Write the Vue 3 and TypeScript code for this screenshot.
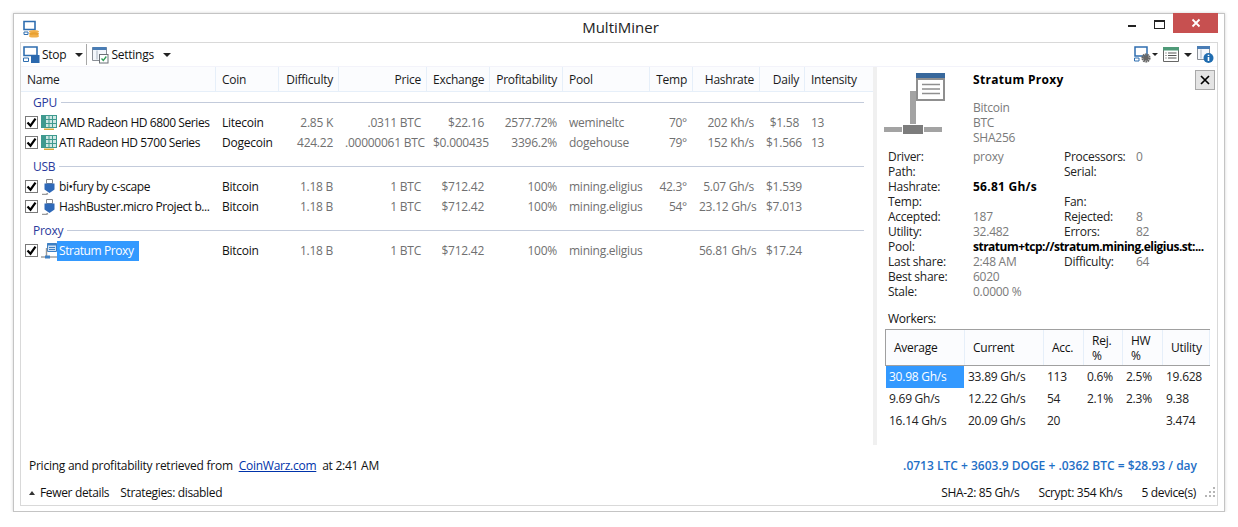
<template>
  <div class="window">
    <div class="titlebar">
      <svg class="app-icon" width="18" height="18" viewBox="0 0 18 18">
        <path d="M1 1.500h11v8H1z" fill="#fff" stroke="#2f6eb0" stroke-width="1.600" />
        <path d="M1 12h4v2.500H1z" fill="none" stroke="#2f6eb0" stroke-width="1" />
        <ellipse cx="11" cy="11.500" rx="5" ry="1.600" fill="#f2b04a" />
        <ellipse cx="11" cy="13.800" rx="5" ry="1.600" fill="#e8a030" />
        <ellipse cx="11" cy="16" rx="5" ry="1.500" fill="#f2b04a" />
      </svg>
      <div class="title">MultiMiner</div>
      <div class="win-buttons">
        <span class="min"></span>
        <span class="max"></span>
        <span class="close">
          <svg width="10" height="10" viewBox="0 0 10 10"><path d="M1.500 1.500l7 7M8.500 1.500l-7 7" stroke="#fff" stroke-width="1.800" /></svg>
        </span>
      </div>
    </div>

    <div class="frame">
      <div class="toolbar">
        <button class="tool stop">
          <svg width="17" height="17" viewBox="0 0 17 17">
            <path d="M1 1h13v8.500H1z" fill="#fff" stroke="#2f6eb0" stroke-width="1.600" />
            <path d="M.5 12h5v3.500h-5z" fill="none" stroke="#2f6eb0" stroke-width="1" />
            <rect x="8" y="9" width="8.500" height="8" fill="#2b69ae" />
          </svg>
          <span>Stop</span>
          <i class="caret"></i>
        </button>
        <span class="tool-sep"></span>
        <button class="tool settings">
          <svg width="17" height="18" viewBox="0 0 17 18">
            <path d="M.5 1.500h14v13H.5z" fill="#f4f7fb" stroke="#8a8f96" />
            <path d="M.5 1h14v3H.5z" fill="#4a7db5" />
            <path d="M5 4.500v9" stroke="#a9b4c0" />
            <rect x="7.500" y="8.500" width="8.500" height="8.500" fill="#fff" stroke="#6b7076" />
            <path d="M9.500 12.500l1.800 2 3-4" fill="none" stroke="#2d9a54" stroke-width="1.300" />
          </svg>
          <span>Settings</span>
          <i class="caret"></i>
        </button>
        <div class="tool-right">
          <svg class="gear-icon" width="19" height="18" viewBox="0 0 19 18">
            <path d="M1 1h12v9H1z" fill="#fff" stroke="#2f6eb0" stroke-width="1.500" />
            <path d="M.5 12h4.500v3H.5z" fill="none" stroke="#2f6eb0" />
            <circle cx="12" cy="12" r="3.400" fill="none" stroke="#666" stroke-width="2.400" stroke-dasharray="1.600 .5" />
            <circle cx="12" cy="12" r="2.600" fill="#666" />
          </svg>
          <i class="caret small"></i>
          <svg class="list-icon" width="17" height="16" viewBox="0 0 17 16">
            <path d="M.5 .5h15v14h-15z" fill="#fff" stroke="#666" />
            <path d="M0 0h16v3.500H0z" fill="#4f9a78" />
            <path d="M2.500 6h1M5 6h8.500M2.500 8.500h1M5 8.500h8.500M2.500 11h1M5 11h8.500" stroke="#555" />
          </svg>
          <i class="caret"></i>
          <svg class="info-icon" width="17" height="18" viewBox="0 0 17 18">
            <path d="M.5 .5h12v13H.5z" fill="#f4f7fb" stroke="#8a8f96" />
            <path d="M0 0h13v3H0z" fill="#4a7db5" />
            <path d="M4 3.500v9" stroke="#a9b4c0" />
            <circle cx="11.500" cy="12" r="5" fill="#1f6cb0" />
            <path d="M11.500 8.800v1.200M11.500 11v4" stroke="#fff" stroke-width="1.600" />
          </svg>
        </div>
      </div>

      <div class="main">
        <div class="list">
          <div class="head row">
            <div v-for="c in columns" :key="c.label" class="cell" :class="{ r: c.right }">{{ c.label }}</div>
          </div>
          <div v-for="g in groups" :key="g.name" class="group">
            <div class="group-head">
              <span>{{ g.name }}</span>
              <i></i>
            </div>
            <div v-for="d in g.devices" :key="d.name" class="row">
              <div class="cell name-cell">
                <span class="check">
                  <svg width="11" height="11" viewBox="0 0 11 11"><path d="M1.500 5.500l3 3.200 5-7" fill="none" stroke="#000" stroke-width="2.200" /></svg>
                </span>
                <svg v-if="g.name === 'GPU'" class="dev-icon" width="16" height="16" viewBox="0 0 16 16">
                  <path d="M0 0h16v13H0z" fill="#3f9a8f" />
                  <path d="M5 1h2.500v3H5zM8.500 1H11v3H8.500zM12 1h3v3h-3zM5 5h2.500v3H5zM8.500 5H11v3H8.500zM12 5h3v3h-3zM5 9h2.500v3H5zM8.500 9H11v3H8.500zM12 9h3v3h-3z" fill="#cfe8e4" />
                  <path d="M3 13.500h10V15H3z" fill="#d9a93a" />
                </svg>
                <svg v-else-if="g.name === 'USB'" class="dev-icon" width="16" height="16" viewBox="0 0 16 16">
                  <path d="M5.500 .5h6v4h-6z" fill="#fff" stroke="#888" />
                  <path d="M3.500 4.500h10v6l-5 3.500-5-3.500z" fill="#2f69b8" />
                  <path d="M1 15.500h4l2-1" fill="none" stroke="#999" stroke-width="1.400" />
                </svg>
                <svg v-else class="dev-icon" width="16" height="17" viewBox="0 0 16 17">
                  <path d="M6.500 .5h9v8h-9z" fill="#cfe0f3" stroke="#3f80c4" />
                  <path d="M6 .5h10v2H6z" fill="#3f80c4" />
                  <path d="M8 4.500h6M8 6.500h6" stroke="#3f80c4" />
                  <path d="M5.500 5v8" stroke="#9a9a9a" stroke-width="1.400" />
                  <path d="M0 14h16" stroke="#9a9a9a" stroke-width="1.400" />
                  <rect x="4" y="12.500" width="5" height="3" fill="#3f80c4" />
                </svg>
                <span class="dev-name" :class="{ selected: d.selected }">{{ d.name }}</span>
              </div>
              <div class="cell coin">{{ d.coin }}</div>
              <div class="cell r">{{ d.difficulty }}</div>
              <div class="cell r">{{ d.price }}</div>
              <div class="cell r">{{ d.exchange }}</div>
              <div class="cell r">{{ d.profit }}</div>
              <div class="cell">{{ d.pool }}</div>
              <div class="cell r">{{ d.temp }}</div>
              <div class="cell r">{{ d.hashrate }}</div>
              <div class="cell r">{{ d.daily }}</div>
              <div class="cell">{{ d.intensity }}</div>
            </div>
          </div>
        </div>

        <div class="details">
          <div class="detail-top">
            <svg class="detail-icon" width="62" height="62" viewBox="0 0 62 62">
              <rect x="26" y="18" width="6" height="33" fill="#a3a3a3" />
              <rect x="32" y="0" width="29" height="6" fill="#38689c" />
              <path d="M33 6h27v21H33z" fill="#fff" stroke="#8f8f8f" stroke-width="2" />
              <path d="M38 11.500h18M38 16h18M38 20.500h18" stroke="#8f8f8f" stroke-width="1.600" />
              <rect x="0" y="54" width="18" height="5" fill="#a3a3a3" />
              <rect x="40" y="54" width="18" height="5" fill="#a3a3a3" />
              <rect x="19" y="52" width="20" height="9" fill="#7c7c7c" />
            </svg>
            <div class="detail-head">
              <div class="detail-name">Stratum Proxy</div>
              <div class="detail-sub">Bitcoin</div>
              <div class="detail-sub">BTC</div>
              <div class="detail-sub">SHA256</div>
            </div>
            <button class="detail-close">
              <svg width="10" height="10" viewBox="0 0 10 10"><path d="M1 1l8 8M9 1l-8 8" stroke="#000" stroke-width="1.700" /></svg>
            </button>
          </div>

          <div class="kv">
            <template v-for="r in kvRows" :key="r.a">
              <div class="k">{{ r.a }}</div>
              <div class="v" :class="[r.cls, { wide: r.wide }]">{{ r.b }}</div>
              <template v-if="!r.wide">
                <div class="k">{{ r.c }}</div>
                <div class="v">{{ r.d }}</div>
              </template>
            </template>
          </div>

          <div class="workers-label">Workers:</div>
          <div class="workers">
            <div class="w-head w-row">
              <div v-for="h in workerHead" :key="h">{{ h }}</div>
            </div>
            <div v-for="(w, i) in workers" :key="i" class="w-row w-body">
              <div v-for="(v, j) in w" :key="j" :class="{ sel: i === 0 && j === 0 }">{{ v }}</div>
            </div>
          </div>
        </div>
      </div>

      <div class="status">
        <div>Pricing and profitability retrieved from <a class="link">CoinWarz.com</a> at 2:41 AM</div>
        <div class="income">.0713 LTC + 3603.9 DOGE + .0362 BTC = $28.93 / day</div>
      </div>
      <div class="footer">
        <span class="fewer"><i></i>Fewer details</span>
        <span>Strategies: disabled</span>
        <span class="foot-right">SHA-2: 85 Gh/s</span>
        <span>Scrypt: 354 Kh/s</span>
        <span>5 device(s)</span>
        <svg class="grip" width="12" height="12" viewBox="0 0 12 12">
          <path d="M9 1h2v2H9zM5 5h2v2H5zM9 5h2v2H9zM1 9h2v2H1zM5 9h2v2H5zM9 9h2v2H9z" fill="#b5b5b5" />
        </svg>
      </div>
    </div>
  </div>
</template>

<script setup lang="ts">
interface Device {
  name: string
  coin: string
  difficulty: string
  price: string
  exchange: string
  profit: string
  pool: string
  temp: string
  hashrate: string
  daily: string
  intensity: string
  selected?: boolean
}

const columns = [
  { label: 'Name' },
  { label: 'Coin' },
  { label: 'Difficulty' },
  { label: 'Price', right: true },
  { label: 'Exchange' },
  { label: 'Profitability' },
  { label: 'Pool' },
  { label: 'Temp' },
  { label: 'Hashrate', right: true },
  { label: 'Daily', right: true },
  { label: 'Intensity' },
]

const groups: { name: string; devices: Device[] }[] = [
  {
    name: 'GPU',
    devices: [
      { name: 'AMD Radeon HD 6800 Series', coin: 'Litecoin', difficulty: '2.85 K', price: '.0311 BTC', exchange: '$22.16', profit: '2577.72%', pool: 'wemineltc', temp: '70°', hashrate: '202 Kh/s', daily: '$1.58', intensity: '13' },
      { name: 'ATI Radeon HD 5700 Series', coin: 'Dogecoin', difficulty: '424.22', price: '.00000061 BTC', exchange: '$0.000435', profit: '3396.2%', pool: 'dogehouse', temp: '79°', hashrate: '152 Kh/s', daily: '$1.566', intensity: '13' },
    ],
  },
  {
    name: 'USB',
    devices: [
      { name: 'bi•fury by c-scape', coin: 'Bitcoin', difficulty: '1.18 B', price: '1 BTC', exchange: '$712.42', profit: '100%', pool: 'mining.eligius', temp: '42.3°', hashrate: '5.07 Gh/s', daily: '$1.539', intensity: '' },
      { name: 'HashBuster.micro Project b...', coin: 'Bitcoin', difficulty: '1.18 B', price: '1 BTC', exchange: '$712.42', profit: '100%', pool: 'mining.eligius', temp: '54°', hashrate: '23.12 Gh/s', daily: '$7.013', intensity: '' },
    ],
  },
  {
    name: 'Proxy',
    devices: [
      { name: 'Stratum Proxy', coin: 'Bitcoin', difficulty: '1.18 B', price: '1 BTC', exchange: '$712.42', profit: '100%', pool: 'mining.eligius', temp: '', hashrate: '56.81 Gh/s', daily: '$17.24', intensity: '', selected: true },
    ],
  },
]

const kvRows: { a: string; b: string; c?: string; d?: string; cls?: string; wide?: boolean }[] = [
  { a: 'Driver:', b: 'proxy', c: 'Processors:', d: '0' },
  { a: 'Path:', b: '', c: 'Serial:', d: '' },
  { a: 'Hashrate:', b: '56.81 Gh/s', c: '', d: '', cls: 'bold rate' },
  { a: 'Temp:', b: '', c: 'Fan:', d: '' },
  { a: 'Accepted:', b: '187', c: 'Rejected:', d: '8' },
  { a: 'Utility:', b: '32.482', c: 'Errors:', d: '82' },
  { a: 'Pool:', b: 'stratum+tcp://stratum.mining.eligius.st:...', cls: 'bold', wide: true },
  { a: 'Last share:', b: '2:48 AM', c: 'Difficulty:', d: '64' },
  { a: 'Best share:', b: '6020', c: '', d: '' },
  { a: 'Stale:', b: '0.0000 %', c: '', d: '' },
]

const workerHead = ['Average', 'Current', 'Acc.', 'Rej. %', 'HW %', 'Utility']

const workers = [
  ['30.98 Gh/s', '33.89 Gh/s', '113', '0.6%', '2.5%', '19.628'],
  ['9.69 Gh/s', '12.22 Gh/s', '54', '2.1%', '2.3%', '9.38'],
  ['16.14 Gh/s', '20.09 Gh/s', '20', '', '', '3.474'],
]
</script>

<style>
html, body {
  background: #fff;
}
</style>

<style scoped>
.window {
  width: 1212px;
  height: 499px;
  margin: 13px 0 0 13px;
  box-sizing: border-box;
  border: 1px solid #c4c4c4;
  box-shadow: 0 0 3px rgba(0, 0, 0, 0.18);
  background: #fff;
  display: flex;
  flex-direction: column;
  padding: 0 6px 5px;
  font-family: "Open Sans", "Liberation Sans", sans-serif;
  font-size: 12px;
  letter-spacing: -0.25px;
  color: #111;
}

.titlebar {
  height: 28px;
  flex: none;
  display: flex;
  align-items: center;
  position: relative;
}

.app-icon {
  margin: 2px 0 0 3px;
}

.title {
  flex: 1;
  text-align: center;
  font-size: 15px;
  letter-spacing: 0;
  color: #222;
  padding: 0 18px 2px 0;
}

.win-buttons {
  position: absolute;
  top: -1px;
  right: 0;
  display: flex;
  align-items: flex-start;
}

.min {
  width: 8px;
  height: 2px;
  background: #222;
  margin: 12px 18px 0 0;
}

.max {
  width: 9px;
  height: 6px;
  border: 1px solid #222;
  border-top-width: 2px;
  margin: 7px 8px 0 0;
}

.close {
  width: 45px;
  height: 20px;
  background: #c75050;
  display: flex;
  align-items: center;
  justify-content: center;
}

.frame {
  flex: 1;
  min-height: 0;
  border: 1px solid #d9d9d9;
  display: flex;
  flex-direction: column;
}

.toolbar {
  height: 23px;
  flex: none;
  display: flex;
  align-items: center;
  border-bottom: 1px solid #f3f3fa;
  padding-left: 2px;
}

.tool {
  display: flex;
  align-items: center;
  border: 0;
  background: none;
  padding: 0;
  font: inherit;
  letter-spacing: inherit;
  color: inherit;
}

.stop span {
  margin-left: 2px;
}

.settings {
  margin-left: 5px;
}

.settings span {
  margin-left: 2px;
}

.caret {
  width: 0;
  height: 0;
  border-left: 4px solid transparent;
  border-right: 4px solid transparent;
  border-top: 4px solid #222;
  margin-left: 9px;
}

.caret.small {
  border-left-width: 3px;
  border-right-width: 3px;
  border-top-width: 3px;
  margin: 0 0 0 -1px;
}

.tool-sep {
  width: 1px;
  height: 21px;
  background: #a8a8a8;
  margin-left: 3px;
}

.tool-right {
  margin-left: auto;
  display: flex;
  align-items: center;
  padding-right: 3px;
}

.list-icon {
  margin-left: 5px;
}

.tool-right .caret:not(.small) {
  margin: 0 5px 0 4px;
}

.main {
  flex: none;
  height: 378px;
  display: flex;
}

.list {
  width: 852px;
  box-sizing: border-box;
  padding-left: 1px;
  flex: none;
}

.row {
  display: grid;
  grid-template-columns: 194px 63px 60px 88px 63px 73px 87px 43px 67px 45px 67px;
  height: 20px;
  line-height: 20px;
  color: #707070;
}

.head {
  height: 24px;
  line-height: 25px;
  margin-left: -1px;
  padding-left: 1px;
  color: #1a1a1a;
  background: #fbfcfe;
  border-bottom: 1px solid #e6eff9;
  box-sizing: content-box;
}

.head .cell {
  border-right: 1px solid #e6eff9;
  padding-right: 5px;
  height: 24px;
  box-sizing: border-box;
}

.head .cell:first-child {
  padding-left: 5px;
}

.head .cell:nth-child(n + 3):nth-child(-n + 6),
.head .cell:nth-child(8) {
  text-align: right;
}

.head .cell:last-child {
  border-right: 0;
}

.cell {
  padding: 0 6px;
  white-space: nowrap;
  min-width: 0;
}

.cell.r {
  text-align: right;
}

.group {
  margin-top: 3px;
}

.head + .group {
  margin-top: 0;
}

.group-head {
  display: flex;
  align-items: center;
  height: 21px;
  padding-left: 11px;
  margin-right: 9px;
  color: #2a3a9c;
}

.group-head i {
  flex: 1;
  height: 1px;
  margin-left: 4px;
  background: #c3cbdb;
}

.name-cell {
  display: flex;
  align-items: center;
  padding: 0 0 0 3px;
  color: #111;
}

.check {
  width: 11px;
  height: 11px;
  flex: none;
  border: 1px solid #7a7a7a;
  background: #fff;
  display: flex;
  margin-top: -2px;
}

.dev-icon {
  flex: none;
  margin-left: 3px;
}

.dev-name {
  padding: 0 6px 0 2px;
  line-height: 20px;
  letter-spacing: -0.42px;
}

.dev-name.selected {
  background: #3399ff;
  color: #fff;
}

.coin {
  color: #111;
}

.details {
  flex: 1;
  min-width: 0;
  border-left: 4px solid #f0f0f0;
  padding: 5px 5px 0 7px;
  position: relative;
}

.detail-top {
  display: flex;
  height: 77px;
}

.detail-icon {
  flex: none;
  margin-top: 1px;
}

.detail-head {
  margin-left: 27px;
}

.detail-name {
  font-weight: 700;
  line-height: 15px;
  margin-bottom: 13px;
  letter-spacing: 0.3px;
  color: #000;
}

.detail-sub {
  line-height: 15px;
  color: #7a7a7a;
}

.detail-close {
  position: absolute;
  top: 3px;
  right: 2px;
  width: 20px;
  height: 20px;
  background: #e4e4e4;
  border: 1px solid #a9a9a9;
  padding: 0;
  display: flex;
  align-items: center;
  justify-content: center;
}

.kv {
  display: grid;
  grid-template-columns: 85px 91px 72px 1fr;
  grid-auto-rows: 15px;
  line-height: 15px;
  margin-left: 4px;
}

.k {
  color: #222;
}

.v {
  color: #7a7a7a;
}

.v.bold {
  font-weight: 700;
  letter-spacing: -0.5px;
  color: #000;
}

.v.rate {
  letter-spacing: 0.25px;
}

.v.wide {
  grid-column: 2 / 5;
  white-space: nowrap;
}

.workers-label {
  margin: 12px 0 0 4px;
  line-height: 15px;
}

.workers {
  width: 325px;
  margin-top: 3px;
  margin-left: 1px;
}

.w-row {
  display: grid;
  grid-template-columns: 79px 79px 40px 39px 40px 47px;
}

.w-head {
  height: 37px;
  box-sizing: border-box;
  border: 1px solid #a0a0a0;
  border-right: 0;
  background: #fbfcfe;
}

.w-head > div {
  display: flex;
  align-items: center;
  padding: 0 8px;
  line-height: 15px;
  border-right: 1px solid #e6eff9;
}

.w-body {
  height: 22px;
  line-height: 22px;
  color: #222;
}

.w-body > div {
  padding-left: 4px;
}

.w-body .sel {
  background: #3399ff;
  color: #fff;
  margin-left: 1px;
  padding-left: 3px;
}

.status {
  display: flex;
  justify-content: space-between;
  height: 20px;
  line-height: 20px;
  margin-top: 11px;
  padding: 0 20px 0 8px;
  flex: none;
}

.link {
  color: #0033aa;
  text-decoration: underline;
  margin: 0 3px;
}

.income {
  font-weight: 600;
  letter-spacing: 0;
  color: #1f6fc6;
}

.footer {
  display: flex;
  align-items: center;
  flex: none;
  height: 20px;
  margin-top: 6px;
  padding-left: 8px;
  gap: 11px;
  letter-spacing: -0.35px;
  position: relative;
}

.fewer i {
  display: inline-block;
  border-left: 3px solid transparent;
  border-right: 3px solid transparent;
  border-bottom: 4px solid #333;
  margin-right: 5px;
  vertical-align: 2px;
}

.foot-right {
  margin-left: auto;
}

.footer span:nth-child(4),
.footer span:nth-child(5) {
  margin-left: 8px;
}

.grip {
  margin-left: -3px;
  margin-right: 1px;
}
</style>
